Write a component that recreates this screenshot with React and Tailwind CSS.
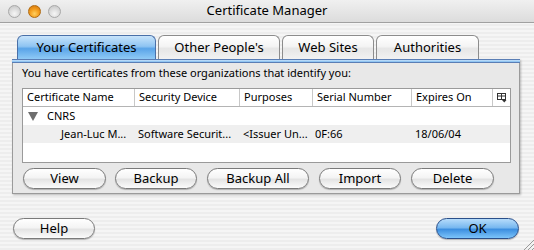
import React from "react";

const font = { fontFamily: '"Lucida Grande", "Noto Sans", sans-serif' };

function Light({ color }) {
  return (
    <div
      className={
        "w-[13px] h-[13px] rounded-full border " +
        (color === "orange"
          ? "border-[#b06a10] bg-[radial-gradient(circle_at_50%_70%,#ffd060_0%,#f5a020_45%,#d07008_100%)]"
          : "border-[#a8a8a8] bg-[radial-gradient(circle_at_50%_70%,#f6f6f6_0%,#dcdcdc_50%,#c0c0c0_100%)]")
      }
    />
  );
}

function Tab({ label, w, active }) {
  return (
    <div
      className={
        "h-[24px] rounded-t-[6px] border border-b-0 flex items-center justify-center text-[13px] text-black " +
        w +
        (active
          ? " border-[#4a70a8] bg-[linear-gradient(to_bottom,#c8e4fb_0%,#8ec4f2_45%,#5aa4e8_55%,#8fcaf6_100%)]"
          : " border-[#8c8c8c] bg-[linear-gradient(to_bottom,#ffffff_0%,#f4f4f4_45%,#e6e6e6_55%,#f2f2f2_100%)]")
      }
    >
      {label}
    </div>
  );
}

function Btn({ label, w, blue }) {
  return (
    <div
      className={
        "h-[21px] rounded-full border flex items-center justify-center text-[13px] text-black shadow-[0_1px_1px_rgba(0,0,0,0.25)] " +
        w +
        (blue
          ? " border-[#2a4f8a] bg-[linear-gradient(to_bottom,#b6dcfb_0%,#78b8f0_45%,#3d8fe0_55%,#7cc4fa_100%)]"
          : " border-[#7a7a7a] bg-[linear-gradient(to_bottom,#ffffff_0%,#f4f4f4_45%,#e4e4e4_55%,#fbfbfb_100%)]")
      }
    >
      {label}
    </div>
  );
}

function HeaderCell({ label, w, last }) {
  return (
    <div
      className={
        "h-full flex items-center pl-[4px] border-r border-[#c8c8c8] " + w
      }
    >
      {label}
    </div>
  );
}

export default function App() {
  return (
    <div
      className="w-[534px] h-[250px] overflow-hidden relative bg-[repeating-linear-gradient(to_bottom,#ededed_0px,#ededed_2px,#f5f5f5_2px,#f5f5f5_4px)]"
      style={font}
    >
      {/* title bar */}
      <div className="h-[23px] relative flex items-center border-b border-[#a0a0a0] bg-[linear-gradient(to_bottom,#f0f0f0,#dcdcdc)]">
        <div className="flex gap-[7px] pl-[8px] pt-[0px]">
          <Light />
          <Light color="orange" />
          <Light />
        </div>
        <div className="absolute inset-0 flex items-center justify-center text-[13px] text-black">
          Certificate Manager
        </div>
      </div>

      {/* tabs */}
      <div className="flex gap-[2px] pl-[17px] mt-[12px] relative z-10">
        <Tab label="Your Certificates" w="w-[139px]" active />
        <Tab label="Other People's" w="w-[122px]" />
        <Tab label="Web Sites" w="w-[92px]" />
        <Tab label="Authorities" w="w-[103px]" />
      </div>

      {/* panel */}
      <div className="ml-[12px] w-[508px] h-[135px] border-l border-r border-b border-[#9a9a9a] bg-[#e8e8e8] shadow-[1px_1px_2px_rgba(0,0,0,0.25)] flex flex-col">
        <div className="h-[4px] border-t border-b border-[#5a7eb5] bg-[linear-gradient(to_bottom,#c8e2fa,#80bdf0)] -mx-[1px]" />
        <div className="text-[11px] text-black pl-[9px] pt-[3px] leading-[14px]">
          You have certificates from these organizations that identify you:
        </div>
        <div className="ml-[9px] mt-[8px] w-[489px] h-[75px] border border-[#9a9a9a] bg-white text-[11px] text-black flex flex-col">
          <div className="h-[18px] flex border-b border-[#b4b4b4] shrink-0">
            <HeaderCell label="Certificate Name" w="w-[112px]" />
            <HeaderCell label="Security Device" w="w-[105px]" />
            <HeaderCell label="Purposes" w="w-[73px]" />
            <HeaderCell label="Serial Number" w="w-[99px]" />
            <HeaderCell label="Expires On" w="w-[81px]" />
            <div className="flex-1 flex items-center justify-center">
              <svg width="10" height="10" viewBox="0 0 10 10">
                <rect x="0.5" y="0.5" width="8" height="6" fill="none" stroke="#333" />
                <line x1="0.5" y1="3" x2="8.5" y2="3" stroke="#333" />
                <line x1="4.5" y1="0.5" x2="4.5" y2="6.5" stroke="#333" />
                <path d="M5 7 L9.5 7 L7.25 9.5 Z" fill="#333" />
              </svg>
            </div>
          </div>
          <div className="h-[18px] flex items-center">
            <svg width="10" height="9" viewBox="0 0 10 9" className="ml-[5px]">
              <path d="M0 0 L10 0 L5 9 Z" fill="#6e6e6e" />
            </svg>
            <span className="ml-[9px]">CNRS</span>
          </div>
          <div className="h-[18px] flex items-center bg-[#efefef]">
            <div className="w-[112px] pl-[38px] whitespace-nowrap">Jean-Luc M...</div>
            <div className="w-[105px] pl-[3px] whitespace-nowrap">Software Securit...</div>
            <div className="w-[73px] pl-[3px] whitespace-nowrap">&lt;Issuer Un...</div>
            <div className="w-[99px] pl-[2px]">0F:66</div>
            <div className="w-[81px] pl-[3px]">18/06/04</div>
          </div>
        </div>
        <div className="flex pl-[10px] mt-[5px]">
          <Btn label="View" w="w-[83px]" />
          <Btn label="Backup" w="w-[82px] ml-[9px]" />
          <Btn label="Backup All" w="w-[102px] ml-[10px]" />
          <Btn label="Import" w="w-[82px] ml-[10px]" />
          <Btn label="Delete" w="w-[83px] ml-[10px]" />
        </div>
      </div>

      {/* bottom buttons */}
      <div className="flex justify-between pl-[13px] pr-[15px] mt-[24px]">
        <Btn label="Help" w="w-[82px]" />
        <Btn label="OK" w="w-[83px]" blue />
      </div>

      {/* resize grip */}
      <svg className="absolute right-0 bottom-0" width="12" height="12" viewBox="0 0 12 12">
        <line x1="2" y1="12" x2="12" y2="2" stroke="#999" />
        <line x1="6" y1="12" x2="12" y2="6" stroke="#999" />
        <line x1="10" y1="12" x2="12" y2="10" stroke="#999" />
      </svg>
    </div>
  );
}
